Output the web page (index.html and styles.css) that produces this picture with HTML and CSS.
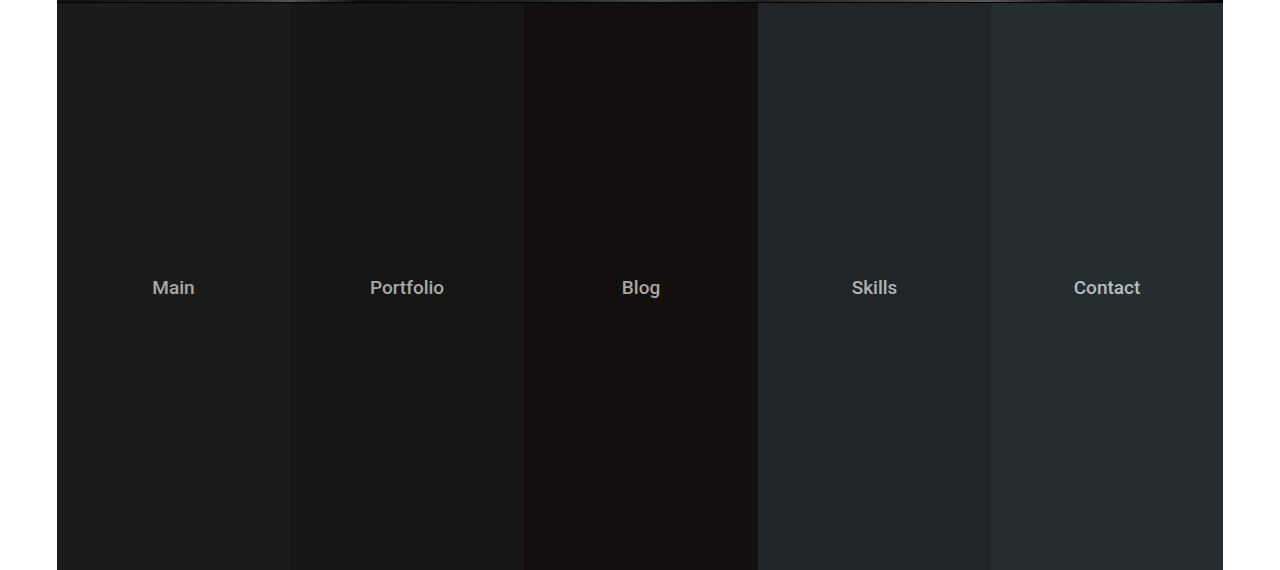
FILE: index.html
```html
<!DOCTYPE html>
<html>
<head>
<meta charset="utf-8">
<link rel="stylesheet" href="styles.css">
</head>
<body>
<div class="wrap">
  <div class="topbar"></div>
  <nav class="panels">
    <a class="panel p1" href="#">Main</a>
    <a class="panel p2" href="#">Portfolio</a>
    <a class="panel p3" href="#">Blog</a>
    <a class="panel p4" href="#">Skills</a>
    <a class="panel p5" href="#">Contact</a>
  </nav>
</div>
</body>
</html>
```
FILE: styles.css
```css
html, body {
  margin: 0;
  padding: 0;
  background: #ffffff;
  overflow: hidden;
}
.wrap {
  width: 1166px;
  margin: 0 auto;
}
.topbar {
  height: 3px;
  background: linear-gradient(90deg, #111 0%, #2a2a2a 14%, #555 20%, #111 26%, #222 40%, #4a4a4a 52%, #222 60%, #3a3a3a 70%, #5a5a5a 80%, #111 88%, #333 95%, #000 100%);
  border-bottom: 1px solid #000;
  box-sizing: border-box;
}
.panels {
  display: grid;
  grid-template-columns: 233px 234px 234px 233px 232px;
  height: 570px;
}
.panel {
  display: flex;
  align-items: center;
  justify-content: center;
  font-family: Roboto, "Liberation Sans", sans-serif;
  font-size: 19px;
  font-weight: 500;
  color: #a9a9a9;
  text-decoration: none;
  padding-bottom: 2px;
}
.p1 { background: #1b1b1b; }
.p2 { background: #161616; }
.p3 { background: #140f0f; color: #a8a6a6; }
.p4 { background: #212527; color: #b0b3b4; }
.p5 { background: #262d30; color: #b8bcbe; }
```
